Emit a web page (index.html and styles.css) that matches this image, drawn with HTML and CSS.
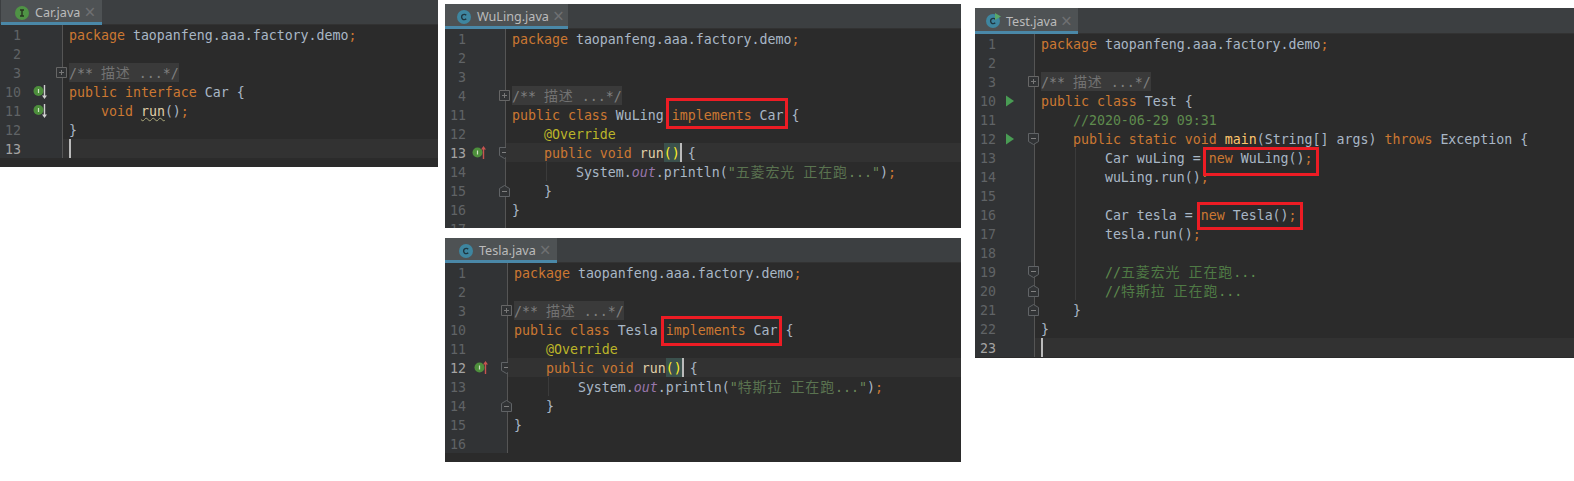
FILE: index.html
```html
<!DOCTYPE html>
<html lang="zh">
<head>
<meta charset="utf-8">
<title>Car factory demo</title>
<link rel="stylesheet" href="styles.css">
</head>
<body>
<svg class="defs" width="0" height="0" aria-hidden="true">
  <symbol id="fold-plus" viewBox="0 0 12 12"><path d="M.5.5h10v10H.5z" fill="#313335" stroke="#666"/><path d="M3 5.500h5M5.500 3v5" stroke="#777" fill="none"/></symbol>
  <symbol id="fold-open" viewBox="0 0 12 13"><path d="M.5.5h10v8l-5 3-5-3z" fill="#313335" stroke="#606366"/><path d="M3 5.500h5" stroke="#808080" fill="none"/></symbol>
  <symbol id="fold-close" viewBox="0 0 12 13"><path d="M.5 11.500h10v-8l-5-3-5 3z" fill="#313335" stroke="#606366"/><path d="M3 6.500h5" stroke="#808080" fill="none"/></symbol>
  <symbol id="impl-down" viewBox="0 0 16 16"><circle cx="5.500" cy="7" r="5" fill="#4d8f3c"/><path d="M5.500 5v4" stroke="#cfe0c4" stroke-width="1.200"/><path d="M11.500 1v12" stroke="#d0d0d0" stroke-width="1.400"/><path d="M9 11.500h5L11.500 15z" fill="#d0d0d0"/></symbol>
  <symbol id="impl-up" viewBox="0 0 16 16"><circle cx="5.500" cy="7.500" r="5" fill="#4d8f3c"/><path d="M5.500 5.500v4" stroke="#cfe0c4" stroke-width="1.200"/><path d="M11.500 3v11" stroke="#c75450" stroke-width="1.400"/><path d="M9 4.500h5L11.500 1z" fill="#c75450"/></symbol>
  <symbol id="run" viewBox="0 0 10 12"><path d="M1 .5l8 5.500-8 5.500z" fill="#499c54"/></symbol>
</svg>

<section class="window win-car">
  <header class="tabs">
    <div class="tab tab-car">
      <svg class="tab-icon" viewBox="0 0 14 14"><circle cx="7" cy="7" r="7" fill="#4f9345"/><path d="M5 4h4M5 10h4M7 4v6" stroke="#26331f" stroke-width="1.400" fill="none"/></svg>
      <span class="tab-name">Car.java</span><span class="tab-close">×</span>
    </div>
  </header>
  <div class="editor">
    <div class="line"><div class="gutter"><span class="num">1</span></div><pre class="code"><span class="k">package</span> taopanfeng.aaa.factory.demo<span class="k">;</span></pre></div>
    <div class="line"><div class="gutter"><span class="num">2</span></div><pre class="code"></pre></div>
    <div class="line"><div class="gutter"><span class="num">3</span><svg class="fold"><use href="#fold-plus"/></svg></div><pre class="code"><span class="folded">/** <span class="cjk">描述</span> ...*/</span></pre></div>
    <div class="line"><div class="gutter"><span class="num">10</span><svg class="mark"><use href="#impl-down"/></svg></div><pre class="code"><span class="k">public interface</span> Car {</pre></div>
    <div class="line"><div class="gutter"><span class="num">11</span><svg class="mark"><use href="#impl-down"/></svg></div><pre class="code">    <span class="k">void</span> <span class="fn-dim wavy">run</span>()<span class="k">;</span></pre></div>
    <div class="line"><div class="gutter"><span class="num">12</span></div><pre class="code">}</pre></div>
    <div class="line current"><div class="gutter"><span class="num">13</span></div><pre class="code"><span class="caret"></span></pre></div>
  </div>
</section>

<section class="window win-wuling">
  <header class="tabs">
    <div class="tab tab-wuling">
      <svg class="tab-icon" viewBox="0 0 14 14"><circle cx="7" cy="7" r="7" fill="#3e86a0"/><path d="M9.200 5.300A2.600 2.600 0 1 0 9.200 8.700" stroke="#1f3640" stroke-width="1.400" fill="none"/></svg>
      <span class="tab-name">WuLing.java</span><span class="tab-close">×</span>
    </div>
  </header>
  <div class="editor">
    <div class="line"><div class="gutter"><span class="num">1</span></div><pre class="code"><span class="k">package</span> taopanfeng.aaa.factory.demo<span class="k">;</span></pre></div>
    <div class="line"><div class="gutter"><span class="num">2</span></div><pre class="code"></pre></div>
    <div class="line"><div class="gutter"><span class="num">3</span></div><pre class="code"></pre></div>
    <div class="line"><div class="gutter"><span class="num">4</span><svg class="fold"><use href="#fold-plus"/></svg></div><pre class="code"><span class="folded">/** <span class="cjk">描述</span> ...*/</span></pre></div>
    <div class="line"><div class="gutter"><span class="num">11</span></div><pre class="code"><span class="k">public class</span> WuLing <span class="k">implements</span> Car {</pre></div>
    <div class="line"><div class="gutter"><span class="num">12</span></div><pre class="code">    <span class="at">@Override</span></pre></div>
    <div class="line current"><div class="gutter"><span class="num">13</span><svg class="mark"><use href="#impl-up"/></svg><svg class="fold fold-tall"><use href="#fold-open"/></svg></div><pre class="code">    <span class="k">public void</span> <span class="fn-dim">run</span><span class="paren">()</span><span class="caret"></span> {</pre></div>
    <div class="line guide"><div class="gutter"><span class="num">14</span></div><pre class="code">        System.<span class="field">out</span>.println(<span class="s">"<span class="cjk">五菱宏光</span> <span class="cjk">正在跑</span>..."</span>)<span class="k">;</span></pre></div>
    <div class="line"><div class="gutter"><span class="num">15</span><svg class="fold fold-tall"><use href="#fold-close"/></svg></div><pre class="code">    }</pre></div>
    <div class="line"><div class="gutter"><span class="num">16</span></div><pre class="code">}</pre></div>
    <div class="line"><div class="gutter"><span class="num">17</span></div><pre class="code"></pre></div>
  </div>
  <div class="box box-wuling"></div>
</section>

<section class="window win-tesla">
  <header class="tabs">
    <div class="tab tab-tesla">
      <svg class="tab-icon" viewBox="0 0 14 14"><circle cx="7" cy="7" r="7" fill="#3e86a0"/><path d="M9.200 5.300A2.600 2.600 0 1 0 9.200 8.700" stroke="#1f3640" stroke-width="1.400" fill="none"/></svg>
      <span class="tab-name">Tesla.java</span><span class="tab-close">×</span>
    </div>
  </header>
  <div class="editor">
    <div class="line"><div class="gutter"><span class="num">1</span></div><pre class="code"><span class="k">package</span> taopanfeng.aaa.factory.demo<span class="k">;</span></pre></div>
    <div class="line"><div class="gutter"><span class="num">2</span></div><pre class="code"></pre></div>
    <div class="line"><div class="gutter"><span class="num">3</span><svg class="fold"><use href="#fold-plus"/></svg></div><pre class="code"><span class="folded">/** <span class="cjk">描述</span> ...*/</span></pre></div>
    <div class="line"><div class="gutter"><span class="num">10</span></div><pre class="code"><span class="k">public class</span> Tesla <span class="k">implements</span> Car {</pre></div>
    <div class="line"><div class="gutter"><span class="num">11</span></div><pre class="code">    <span class="at">@Override</span></pre></div>
    <div class="line current"><div class="gutter"><span class="num">12</span><svg class="mark"><use href="#impl-up"/></svg><svg class="fold fold-tall"><use href="#fold-open"/></svg></div><pre class="code">    <span class="k">public void</span> <span class="fn-dim">run</span><span class="paren">()</span><span class="caret"></span> {</pre></div>
    <div class="line guide"><div class="gutter"><span class="num">13</span></div><pre class="code">        System.<span class="field">out</span>.println(<span class="s">"<span class="cjk">特斯拉</span> <span class="cjk">正在跑</span>..."</span>)<span class="k">;</span></pre></div>
    <div class="line"><div class="gutter"><span class="num">14</span><svg class="fold fold-tall"><use href="#fold-close"/></svg></div><pre class="code">    }</pre></div>
    <div class="line"><div class="gutter"><span class="num">15</span></div><pre class="code">}</pre></div>
    <div class="line"><div class="gutter"><span class="num">16</span></div><pre class="code"></pre></div>
  </div>
  <div class="box box-tesla"></div>
</section>

<section class="window win-test">
  <header class="tabs">
    <div class="tab tab-test">
      <svg class="tab-icon" viewBox="0 0 14 14"><circle cx="7" cy="7" r="7" fill="#3e86a0"/><path d="M9.200 5.300A2.600 2.600 0 1 0 9.200 8.700" stroke="#1f3640" stroke-width="1.400" fill="none"/><path d="M9-1l6 3.500L9 6z" fill="#59a869"/></svg>
      <span class="tab-name">Test.java</span><span class="tab-close">×</span>
    </div>
  </header>
  <div class="editor">
    <div class="line"><div class="gutter"><span class="num">1</span></div><pre class="code"><span class="k">package</span> taopanfeng.aaa.factory.demo<span class="k">;</span></pre></div>
    <div class="line"><div class="gutter"><span class="num">2</span></div><pre class="code"></pre></div>
    <div class="line"><div class="gutter"><span class="num">3</span><svg class="fold"><use href="#fold-plus"/></svg></div><pre class="code"><span class="folded">/** <span class="cjk">描述</span> ...*/</span></pre></div>
    <div class="line"><div class="gutter"><span class="num">10</span><svg class="mark-run"><use href="#run"/></svg></div><pre class="code"><span class="k">public class</span> Test {</pre></div>
    <div class="line"><div class="gutter"><span class="num">11</span></div><pre class="code">    <span class="c">//2020-06-29 09:31</span></pre></div>
    <div class="line"><div class="gutter"><span class="num">12</span><svg class="mark-run"><use href="#run"/></svg><svg class="fold fold-tall"><use href="#fold-open"/></svg></div><pre class="code">    <span class="k">public static void</span> <span class="fn">main</span>(String[] args) <span class="k">throws</span> Exception {</pre></div>
    <div class="line guide"><div class="gutter"><span class="num">13</span></div><pre class="code">        Car wuLing = <span class="k">new</span> WuLing()<span class="k">;</span></pre></div>
    <div class="line guide"><div class="gutter"><span class="num">14</span></div><pre class="code">        wuLing.run()<span class="k">;</span></pre></div>
    <div class="line guide"><div class="gutter"><span class="num">15</span></div><pre class="code"></pre></div>
    <div class="line guide"><div class="gutter"><span class="num">16</span></div><pre class="code">        Car tesla = <span class="k">new</span> Tesla()<span class="k">;</span></pre></div>
    <div class="line guide"><div class="gutter"><span class="num">17</span></div><pre class="code">        tesla.run()<span class="k">;</span></pre></div>
    <div class="line guide"><div class="gutter"><span class="num">18</span></div><pre class="code"></pre></div>
    <div class="line guide"><div class="gutter"><span class="num">19</span><svg class="fold fold-tall"><use href="#fold-open"/></svg></div><pre class="code">        <span class="c">//<span class="cjk">五菱宏光</span> <span class="cjk">正在跑</span>...</span></pre></div>
    <div class="line guide"><div class="gutter"><span class="num">20</span><svg class="fold fold-tall"><use href="#fold-close"/></svg></div><pre class="code">        <span class="c">//<span class="cjk">特斯拉</span> <span class="cjk">正在跑</span>...</span></pre></div>
    <div class="line"><div class="gutter"><span class="num">21</span><svg class="fold fold-tall"><use href="#fold-close"/></svg></div><pre class="code">    }</pre></div>
    <div class="line"><div class="gutter"><span class="num">22</span></div><pre class="code">}</pre></div>
    <div class="line current"><div class="gutter"><span class="num">23</span></div><pre class="code"><span class="caret"></span></pre></div>
  </div>
  <div class="box box-test-a"></div>
  <div class="box box-test-b"></div>
</section>
</body>
</html>
```

FILE: styles.css
```css
* { box-sizing: border-box; }

html, body {
  margin: 0;
  height: 100%;
  background: #fff;
  overflow: hidden;
}

.defs { position: absolute; }

/* Each window is a separate screenshot placed on a white canvas */
.window {
  position: absolute;
  display: flex;
  flex-direction: column;
  overflow: hidden;
  background: #2b2b2b;
  --gutter: 62px;
  --mark: 12px;
}
.win-car    { left: 0;      top: 0;     width: 438px; height: 167px; }
.win-wuling { left: 445px;  top: 4px;   width: 516px; height: 224px; --gutter: 60px; --mark: 6px; }
.win-tesla  { left: 445px;  top: 238px; width: 516px; height: 224px; --mark: 8px; }
.win-test   { left: 975px;  top: 8px;   width: 599px; height: 350px; --gutter: 59px; --mark: 9px; }

.tabs {
  flex: none;
  display: flex;
  height: 25px;
  background: #3c3f41;
  border-bottom: 1px solid #323232;
}
.win-test .tabs { height: 26px; }

.tab {
  display: flex;
  align-items: center;
  height: 25px;
  padding-top: 3px;
  background: #4e5254;
  border-bottom: 3px solid #4a88a8;
  color: #bbb;
  font: 12.6px "Noto Sans", sans-serif;
}
.win-test .tab { height: 26px; }
.tab-car    { margin-left: 1px; width: 101px; padding-left: 14px; }
.tab-wuling { width: 123px; padding-left: 12px; }
.tab-tesla  { width: 112px; padding-left: 14px; }
.tab-test   { width: 103px; padding-left: 11px; }

.tab-icon { width: 14px; height: 14px; overflow: visible; flex: none; }
.tab-name { margin-left: 6px; }
.tab-close { margin-left: 4px; color: #6e7072; font-size: 19px; line-height: 1; }

.editor { flex: 1; min-height: 0; }

.line {
  display: flex;
  height: 19px;
}

.gutter {
  position: relative;
  flex: none;
  display: flex;
  align-items: center;
  width: calc(var(--gutter) + 1px);
  height: 19px;
  background: #313335;
  border-right: 1px solid #555;
}

.num {
  align-self: flex-start;
  width: 21px;
  text-align: right;
  color: #606366;
  font: 13.28px/21px "DejaVu Sans Mono", monospace;
}
.current .num { color: #a4a3a3; }

.mark { width: 16px; height: 16px; margin-left: var(--mark); }
.mark-run { width: 10px; height: 12px; margin-left: var(--mark); }

/* Fold markers sit on top of the gutter divider */
.fold {
  position: absolute;
  right: -6px;
  top: 4px;
  width: 12px;
  height: 12px;
}
.fold-tall { height: 13px; }

.code {
  position: relative;
  flex: 1;
  margin: 0;
  padding-left: 6px;
  height: 19px;
  color: #a9b7c6;
  font: 13.28px/21px "DejaVu Sans Mono", "Noto Sans CJK SC", monospace;
  white-space: pre;
}
.current .code { background: #323232; }

.guide .code::before {
  content: "";
  position: absolute;
  left: 40px;
  top: 0;
  bottom: 0;
  width: 1px;
  background: #3b3b3b;
}

.k { color: #cc7832; }
.at { color: #bbb529; }
.fn { color: #ffc66d; }
.fn-dim { color: #e0d0a8; }
.field { color: #9876aa; font-style: italic; }
.s { color: #6a8759; }
.c { color: #5f8c4e; }
.folded { display: inline-block; height: 19px; color: #808080; background: #3a3a3a; }
.cjk {
  font-family: "Noto Sans CJK SC", sans-serif;
  font-size: 14px;
  letter-spacing: .9px;
  line-height: 1;
}
.folded .cjk { color: #727272; }
.s .cjk { color: #5a7350; }
.c .cjk { color: #4f7a45; }
.wavy {
  text-decoration: underline wavy #a8a67a 1px;
  text-underline-offset: 1px;
}
.paren { display: inline-block; height: 19px; color: #ffef28; background: #3b514d; }
.caret {
  display: inline-block;
  width: 2px;
  height: 19px;
  margin-right: -2px;
  vertical-align: top;
  background: #bbb;
}

/* Red annotation rectangles drawn over the code */
.box {
  position: absolute;
  border: 3px solid #ed1c24;
}
.box-wuling { left: 221px; top: 94px; width: 122px; height: 31px; }
.box-tesla  { left: 216px; top: 78px; width: 121px; height: 30px; }
.box-test-a { left: 228px; top: 139px; width: 116px; height: 29px; }
.box-test-b { left: 222px; top: 194px; width: 106px; height: 28px; }
```
